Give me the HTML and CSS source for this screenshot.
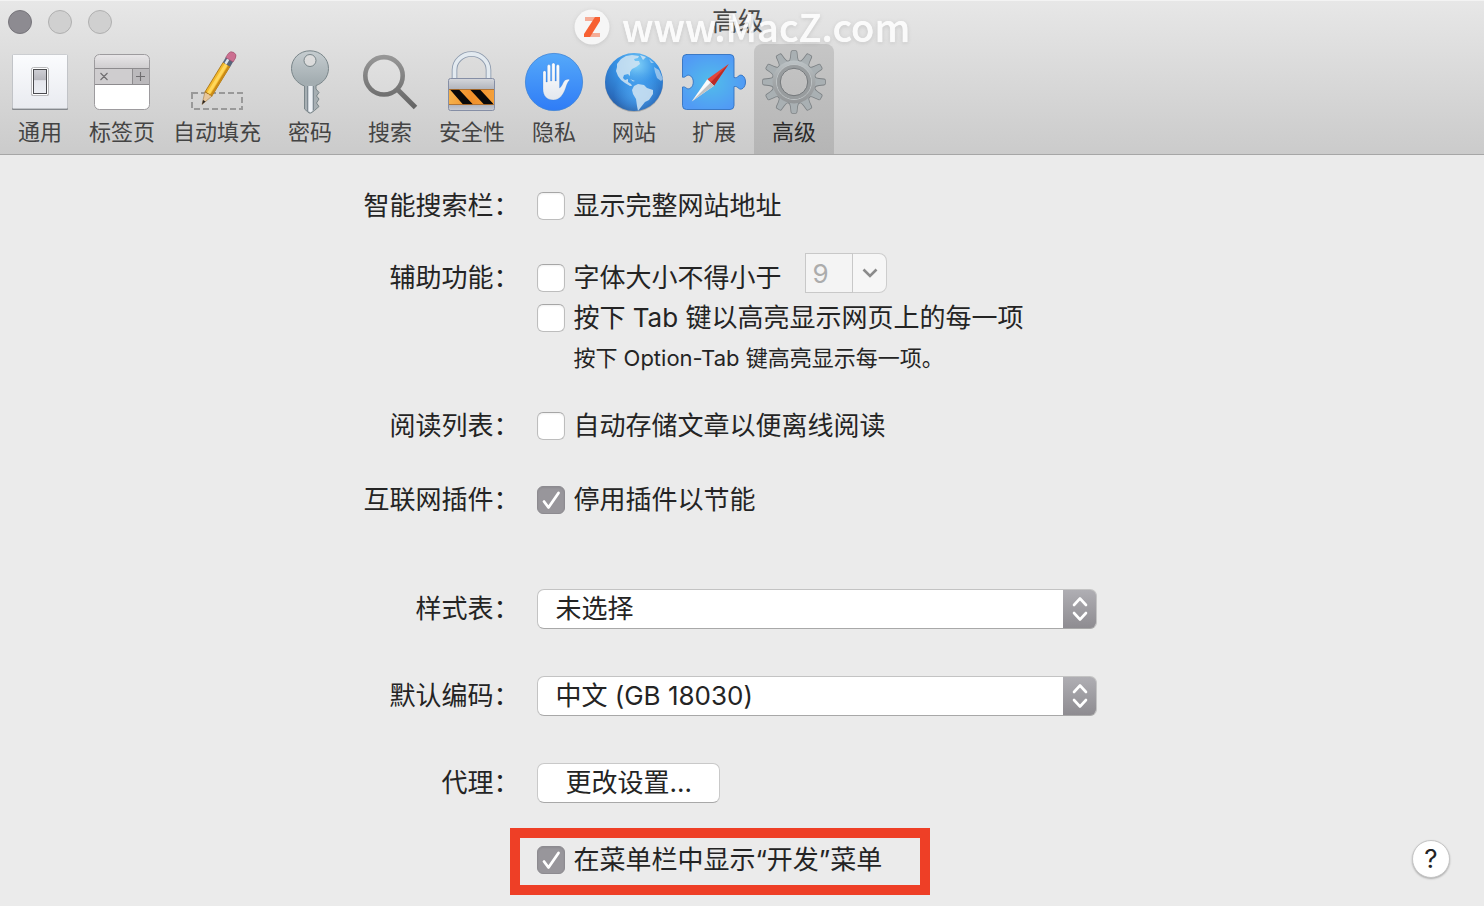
FILE: index.html
```html
<!DOCTYPE html>
<html lang="zh-CN">
<head>
<meta charset="utf-8">
<meta name="viewport" content="width=device-width, initial-scale=1">
<title>高级</title>
<link rel="stylesheet" href="styles.css">
</head>
<body>
<header class="header">
  <div class="titlebar">
    <div class="lights">
      <button class="light light-close" type="button" aria-label="关闭"></button>
      <button class="light" type="button" aria-label="最小化"></button>
      <button class="light" type="button" aria-label="缩放"></button>
    </div>
    <h1 class="title">高级</h1>
  </div>
  <nav class="toolbar">
    <button class="tool" type="button">
      <svg class="icon" viewBox="0 0 64 64" aria-hidden="true">
        <defs>
          <linearGradient id="plate" x1="0" y1="0" x2="0" y2="1"><stop offset="0" stop-color="#fbfcfe"/><stop offset="1" stop-color="#e9ebf0"/></linearGradient>
          <linearGradient id="rocker" x1="0" y1="0" x2="0" y2="1"><stop offset="0" stop-color="#cfcfd5"/><stop offset=".45" stop-color="#b6b6bc"/><stop offset=".46" stop-color="#e6e7ed"/><stop offset="1" stop-color="#eceef3"/></linearGradient>
        </defs>
        <rect x="4" y="5" width="56" height="55" rx="1" fill="#85888d"/>
        <rect x="4.500" y="4.500" width="55" height="54" rx="1" fill="url(#plate)" stroke="#c3c5c9" stroke-width=".8"/>
        <rect x="23" y="18" width="18" height="28" rx="2" fill="#aaa"/>
        <rect x="23.500" y="17.500" width="17" height="28" rx="2" fill="#fff" stroke="#b9b9bb"/>
        <rect x="25.500" y="19.500" width="13" height="24" fill="url(#rocker)" stroke="#4b4b4f" stroke-width="1"/>
      </svg>
      <span class="tool-label">通用</span>
    </button>
    <button class="tool" type="button">
      <svg class="icon" viewBox="0 0 64 64" aria-hidden="true">
        <defs><linearGradient id="tabtop" x1="0" y1="0" x2="0" y2="1"><stop offset="0" stop-color="#e9e7e9"/><stop offset="1" stop-color="#cfcdcf"/></linearGradient></defs>
        <rect x="4.500" y="4.500" width="55" height="55" rx="5" fill="#fff"/>
        <path d="M4.500 18.500V9.500a5 5 0 0 1 5-5h45a5 5 0 0 1 5 5v9z" fill="url(#tabtop)"/>
        <path d="M4.500 18.500h38v16h-38z" fill="#cfcdcf"/>
        <path d="M42.500 18.500h17v16h-17z" fill="#bbb9bc"/>
        <path d="M4.500 18.500h55M4.500 34.500h55M42.500 18.500v16" stroke="#8d8b8e" fill="none"/>
        <rect x="4.500" y="4.500" width="55" height="55" rx="5" fill="none" stroke="#9d9b9e"/>
        <path d="M10.500 23l7 7m0-7l-7 7M46 26.500h9M50.500 22v9" stroke="#6f6d70" stroke-width="1.100" fill="none"/>
      </svg>
      <span class="tool-label">标签页</span>
    </button>
    <button class="tool" type="button">
      <svg class="icon" viewBox="0 0 64 64" aria-hidden="true">
        <rect x="7" y="43" width="50" height="16" fill="none" stroke="#999" stroke-width="2" stroke-dasharray="6 3"/>
        <g transform="translate(17 54.500) rotate(31.500)">
          <path d="M0 0L-4 -12L0 -14L4 -12Z" fill="#e8c79b" stroke="#a8824f" stroke-width=".6"/>
          <path d="M0 0L-1.500 -4.500H1.500Z" fill="#2d2926"/>
          <path d="M-4 -12V-47H4V-12Q2.700 -14 1.400 -12Q0 -14 -1.400 -12Q-2.700 -14 -4 -12Z" fill="#f3b92c" stroke="#a97312" stroke-width=".8"/>
          <path d="M-1.800 -13V-47H1.200V-13Z" fill="#ffd75c"/>
          <path d="M2 -13V-47H4V-13Z" fill="#c98a17"/>
          <path d="M-4.300 -47h8.600v-6h-8.600z" fill="#58657b"/>
          <path d="M-2.500 -47h2.500v-6h-2.500z" fill="#dce5ef"/>
          <path d="M-4.300 -52.500V-57Q-4 -61 0 -61T4.300 -57V-52.500Z" fill="#cc6f91" stroke="#9d4f6b" stroke-width=".6"/>
        </g>
      </svg>
      <span class="tool-label">自动填充</span>
    </button>
    <button class="tool" type="button">
      <svg class="icon" viewBox="0 0 64 64" aria-hidden="true">
        <defs>
          <linearGradient id="key" x1="0" y1="0" x2="0" y2="1"><stop offset="0" stop-color="#c6cdd0"/><stop offset=".5" stop-color="#a3adb1"/><stop offset="1" stop-color="#a9b0b5"/></linearGradient>
        </defs>
        <path fill-rule="evenodd" d="M32 .8C42.500 .8 50.500 8.500 50.500 18.500C50.500 27 44.500 33.500 38 35.500V39l3 3.500-2.500 3.500 2.500 3-2.500 4 2.500 3.500-4.500 4-3.500 2.500H31L26.500 59V36C19.500 33.500 13.500 27 13.500 18.500C13.500 8.500 21.500 .8 32 .8ZM32 4.500a6 6 0 1 0 0 12a6 6 0 1 0 0-12Z" fill="url(#key)" stroke="#798589" stroke-width="1"/>
        <path d="M30.500 36h4v25l-2 1.500-2-1.500z" fill="#edf1f6"/>
        <path d="M29.500 36v25M35.500 36v24" stroke="#7f8a93" stroke-width="1"/>
      </svg>
      <span class="tool-label">密码</span>
    </button>
    <button class="tool" type="button">
      <svg class="icon" viewBox="0 0 64 64" aria-hidden="true">
        <defs><linearGradient id="lens" gradientUnits="userSpaceOnUse" x1="0" y1="4" x2="0" y2="60"><stop offset="0" stop-color="#999"/><stop offset="1" stop-color="#626262"/></linearGradient></defs>
        <circle cx="26" cy="25.800" r="18.700" fill="#fff" fill-opacity=".12" stroke="url(#lens)" stroke-width="4.600"/>
        <path d="M39.500 39.500L57.500 57.500" stroke="url(#lens)" stroke-width="5"/>
      </svg>
      <span class="tool-label">搜索</span>
    </button>
    <button class="tool" type="button">
      <svg class="icon" viewBox="0 0 64 64" aria-hidden="true">
        <defs>
          <linearGradient id="lockbody" x1="0" y1="0" x2="0" y2="1"><stop offset="0" stop-color="#d5d7dc"/><stop offset=".3" stop-color="#b5b8c0"/><stop offset=".8" stop-color="#adb1bb"/><stop offset="1" stop-color="#c9ccd3"/></linearGradient>
          <linearGradient id="amber"><stop offset="0" stop-color="#f5b04a"/><stop offset=".5" stop-color="#f0902a"/><stop offset="1" stop-color="#f4a03a"/></linearGradient>
        </defs>
        <path d="M14.500 29V20a17 16 0 0 1 34 0V29" fill="none" stroke="#8e9bae" stroke-width="5.600"/>
        <path d="M14.500 29V20a17 16 0 0 1 34 0V29" fill="none" stroke="#e3eaf0" stroke-width="3.800"/>
        <rect x="8.500" y="28.500" width="46" height="32" rx="2" fill="url(#lockbody)" stroke="#858ea5"/>
        <path d="M9 39.500h45v15H9z" fill="url(#amber)"/>
        <path d="M10 39.500h9l14 15h-10zM30 39.500h10l13 14v1h-9z" fill="#090909"/>
        <path d="M9 39.500h45M9 54.500h45" stroke="#a86623" stroke-width=".8"/>
      </svg>
      <span class="tool-label">安全性</span>
    </button>
    <button class="tool" type="button">
      <svg class="icon" viewBox="0 0 64 64" aria-hidden="true">
        <defs>
          <linearGradient id="privacy" x1="0" y1="0" x2="0" y2="1"><stop offset="0" stop-color="#55a9fa"/><stop offset="1" stop-color="#2f7cf6"/></linearGradient>
          <linearGradient id="palm" x1="0" y1="0" x2="0" y2="1"><stop offset="0" stop-color="#fff"/><stop offset="1" stop-color="#e2e7ee"/></linearGradient>
        </defs>
        <circle cx="32" cy="32" r="28.600" fill="url(#privacy)" stroke="#3b83d8" stroke-width=".8"/>
        <path d="M21 22.200a1.500 1.500 0 0 1 3 0V32h1.300V16.200a1.600 1.600 0 0 1 3.200 0V31h1.300V14.600a1.600 1.600 0 0 1 3.200 0V31h1.300V16.200a1.600 1.600 0 0 1 3.200 0V38c1.500-.8 2.500-2.500 3.800-5.500c1.200-2.600 3-3.400 5.500-3.300c.8.100 1 .8.400 1.400c-1.600 1.600-2.200 3.600-3.400 6.800c-2.200 6.500-5.600 12.500-12.500 12.500c-6.600 0-10.300-4.200-10.300-11z" fill="url(#palm)" stroke="#2b6dc0" stroke-opacity=".35" stroke-width=".6"/>
      </svg>
      <span class="tool-label">隐私</span>
    </button>
    <button class="tool" type="button">
      <svg class="icon" viewBox="0 0 64 64" aria-hidden="true">
        <defs>
          <radialGradient id="ocean" cx=".55" cy=".2" r=".85"><stop offset="0" stop-color="#7fd0f8"/><stop offset=".4" stop-color="#3793e6"/><stop offset=".8" stop-color="#2a6cbd"/><stop offset="1" stop-color="#2b5c9c"/></radialGradient>
          <radialGradient id="glow" cx=".55" cy=".7" r=".4"><stop offset="0" stop-color="#4ba2ee"/><stop offset="1" stop-color="#4ba2ee" stop-opacity="0"/></radialGradient>
          <clipPath id="sphere"><circle cx="32" cy="32" r="29"/></clipPath>
        </defs>
        <circle cx="32" cy="33" r="29" fill="#777" opacity=".45"/>
        <circle cx="32" cy="32" r="29" fill="url(#ocean)"/>
        <circle cx="32" cy="32" r="29" fill="url(#glow)"/>
        <g clip-path="url(#sphere)" fill="#cfe3f2" opacity=".88">
          <path d="M15 14L19 9L24 6L30 5L37 6L36 8L32 9L33 11L37 11L38 14L34 17L30 19L28 22L28 26L26 24L22 25L21 28L23 30L26 29L26 32L29 34L30 36L28 36L23 33L19 30L16 26L14 21L15 17Z"/>
          <path d="M32 36L36 34L42 35L45 38L51 40L51 44L47 50L43 52L39 57L36 61L35 56L34 49L31 44L30 40Z"/>
          <path d="M28 29L33 31L31 31.500ZM38 5L44 7L41 10Z"/>
          <path d="M52 17L57 20L61 29L59 31L55 28L53 22ZM47 9L52 13L49 13Z" opacity=".7"/>
        </g>
      </svg>
      <span class="tool-label">网站</span>
    </button>
    <button class="tool" type="button">
      <svg class="icon" viewBox="0 0 64 64" aria-hidden="true">
        <defs><radialGradient id="puzzle" cx=".45" cy=".5" r=".55"><stop offset="0" stop-color="#51bdea"/><stop offset="1" stop-color="#519af5"/></radialGradient></defs>
        <path d="M4 4.500H48a4 4 0 0 1 4 4V27.500c2 .5 3.500 0 4.200-1.200c3-3 7.300 0 7.300 5.700s-4.300 9-7.300 6c-1-1.300-2.300-1.800-4.200-1.400V55.500a4 4 0 0 1-4 4H4.500a4 4 0 0 1-4-4V37c1.500-.3 2.600 0 3.600 1c3 2.500 7.200-.8 7.200-6s-4.200-8.500-7.200-6c-1 1-2.100 1.500-3.600 1.200V8.500a4 4 0 0 1 4-4z" fill="url(#puzzle)" stroke="#3272c0" stroke-width=".9"/>
        <path d="M46.700 14L25.300 29.300L32 35.700Z" fill="#e2453a"/>
        <path d="M46.700 14L28.600 32.500L32 35.700Z" fill="#b92a27"/>
        <path d="M9.700 51.500L25.300 29.300L32 35.700Z" fill="#fafafa"/>
        <path d="M9.700 51.500L28.600 32.500L32 35.700Z" fill="#bfc1c3"/>
      </svg>
      <span class="tool-label">扩展</span>
    </button>
    <button class="tool tool-active" type="button" aria-current="page">
      <svg class="icon" viewBox="0 0 64 64" aria-hidden="true">
        <defs>
          <linearGradient id="steel" gradientUnits="userSpaceOnUse" x1="0" y1="0" x2="0" y2="64"><stop offset="0" stop-color="#c9d1d4"/><stop offset=".5" stop-color="#a3a7a9"/><stop offset="1" stop-color="#8b8d8f"/></linearGradient>
          <path id="tooth" d="M26.500 12Q28.600 10.500 28.900 7L29.400 2Q29.500 1 30.400 1H33.600Q34.500 1 34.600 2L35.100 7Q35.400 10.500 37.500 12Z"/>
          <g id="teeth">
            <use href="#tooth"/><use href="#tooth" transform="rotate(30 32 32)"/><use href="#tooth" transform="rotate(60 32 32)"/><use href="#tooth" transform="rotate(90 32 32)"/><use href="#tooth" transform="rotate(120 32 32)"/><use href="#tooth" transform="rotate(150 32 32)"/><use href="#tooth" transform="rotate(180 32 32)"/><use href="#tooth" transform="rotate(210 32 32)"/><use href="#tooth" transform="rotate(240 32 32)"/><use href="#tooth" transform="rotate(270 32 32)"/><use href="#tooth" transform="rotate(300 32 32)"/><use href="#tooth" transform="rotate(330 32 32)"/>
          </g>
          <mask id="bore"><rect width="64" height="64" fill="#fff"/><circle cx="32" cy="32" r="13.500"/></mask>
        </defs>
        <g mask="url(#bore)">
          <use href="#teeth" fill="none" stroke="#7c8184" stroke-width="1.600"/>
          <circle cx="32" cy="32" r="22.300" fill="#7c8184"/>
          <use href="#teeth" fill="#a9b0b3"/>
          <circle cx="32" cy="32" r="21.500" fill="url(#steel)"/>
        </g>
        <circle cx="32" cy="32" r="17.500" fill="none" stroke="#bfc4c6" stroke-width="1"/>
        <circle cx="32" cy="32" r="15.500" fill="none" stroke="#989c9e" stroke-width="3"/>
        <circle cx="32" cy="32" r="13.700" fill="none" stroke="#74787b" stroke-width="1"/>
      </svg>
      <span class="tool-label">高级</span>
    </button>
  </nav>
  <div class="watermark" aria-hidden="true">
    <svg class="watermark-logo" viewBox="0 0 36 36"><circle cx="18" cy="18" r="17.500" fill="#fafafa"/><path d="M11 8h13v4H11zM12 24h14v4H12z" fill="#f9a58c"/><path d="M21 8h5v4L16 28h-6v-3z" fill="#fb4b16"/></svg>
    <span class="watermark-text">www.MacZ.com</span>
  </div>
</header>

<main class="panel">
  <div class="row">
    <span class="row-label">智能搜索栏：</span>
    <label class="option"><input class="check" type="checkbox">显示完整网站地址</label>
  </div>
  <div class="group-access">
    <div class="row">
      <span class="row-label">辅助功能：</span>
      <div class="font-size">
        <label class="option"><input class="check" type="checkbox">字体大小不得小于</label>
        <div class="combo">
          <input class="combo-input" type="text" value="9" aria-label="最小字体大小" disabled>
          <button class="combo-button" type="button" aria-label="选择字体大小" disabled>
            <svg class="combo-arrow" viewBox="0 0 16 10" aria-hidden="true"><path d="M1.500 1.500L8 8L14.500 1.500" fill="none" stroke="#8b8b8b" stroke-width="2.600"/></svg>
          </button>
        </div>
      </div>
    </div>
    <div class="row">
      <label class="option"><input class="check" type="checkbox" aria-describedby="tab-note">按下 Tab 键以高亮显示网页上的每一项</label>
    </div>
    <div class="row">
      <p class="note" id="tab-note">按下 Option-Tab 键高亮显示每一项。</p>
    </div>
  </div>
  <div class="row row-reading">
    <span class="row-label">阅读列表：</span>
    <label class="option"><input class="check" type="checkbox">自动存储文章以便离线阅读</label>
  </div>
  <div class="row row-plugins">
    <span class="row-label">互联网插件：</span>
    <label class="option"><input class="check" type="checkbox" checked>停用插件以节能</label>
  </div>
  <div class="row row-style">
    <label class="row-label" for="stylesheet">样式表：</label>
    <select class="popup" id="stylesheet"><option>未选择</option></select>
  </div>
  <div class="row row-popup">
    <label class="row-label" for="encoding">默认编码：</label>
    <select class="popup" id="encoding"><option>中文 (GB 18030)</option></select>
  </div>
  <div class="row row-popup">
    <span class="row-label">代理：</span>
    <button class="push" type="button">更改设置…</button>
  </div>
  <div class="row row-develop">
    <div class="footer">
      <div class="highlight"><label class="option"><input class="check" type="checkbox" checked>在菜单栏中显示“开发”菜单</label></div>
      <button class="help" type="button" aria-label="帮助">?</button>
    </div>
  </div>
</main>
</body>
</html>
```
FILE: styles.css
```css
* {
  box-sizing: border-box;
}

body {
  margin: 0;
  min-height: 100vh;
  background: #ebebeb;
  color: #242424;
  font: 26px/40px Inter, "Noto Sans CJK SC", sans-serif;
}

button,
input,
select {
  margin: 0;
  font: inherit;
  color: inherit;
}

.header {
  position: relative;
  background: linear-gradient(#e7e7e7, #cbcbcb);
  border-top: 1px solid #f3f3f3;
  border-bottom: 1px solid #a6a6a6;
}

.titlebar {
  display: grid;
  grid-template-columns: 1fr auto 1fr;
  align-items: center;
  height: 43px;
  padding: 0 16px 2px 8px;
}

.lights {
  display: flex;
  gap: 16px;
}

.light {
  width: 24px;
  height: 24px;
  padding: 0;
  border: 1px solid #b0b0b0;
  border-radius: 50%;
  background: #d0d0d0;
}

.light-close {
  border-color: #77757b;
  background: #8d8b91;
}

.title {
  margin: 0;
  font-size: 26px;
  font-weight: 400;
  color: #484848;
}

.toolbar {
  display: flex;
}

.tool {
  display: flex;
  flex-direction: column;
  align-items: center;
  min-width: 80px;
  padding: 6px 8px 4px;
  border: 0;
  border-radius: 8px 8px 0 0;
  background: none;
  color: #444;
}

.tool-active {
  background: linear-gradient(#c6c6c6, #b5b5b5);
  color: #2b2b2b;
}

.icon {
  width: 64px;
  height: 64px;
}

.tool-label {
  padding: 0 1px;
  font-size: 22px;
  line-height: 36px;
  white-space: nowrap;
}

.watermark {
  position: absolute;
  top: 6px;
  left: 50%;
  display: flex;
  align-items: flex-end;
  gap: 12px;
  margin-left: -168px;
  opacity: 0.86;
  pointer-events: none;
}

.watermark-logo {
  width: 36px;
  height: 36px;
  filter: drop-shadow(0 1px 2px #9996);
}

.watermark-text {
  font: 500 38px/38px "Noto Sans CJK SC", sans-serif;
  color: #fff;
  text-shadow: 0 0 1px #fff, 0 1px 4px #8886;
}

.panel {
  padding-top: 31px;
}

.row {
  display: grid;
  grid-template-columns: 35% 1fr;
  column-gap: 18px;
  align-items: end;
}

.row > :last-child {
  grid-column: 2;
}

.row-label {
  text-align: right;
}

.option {
  display: flex;
  align-items: center;
  gap: 8px;
}

.check {
  flex: none;
  width: 28px;
  height: 28px;
  appearance: none;
  border: 1px solid #bdbdbd;
  border-top-color: #a6a6a6;
  border-radius: 6px;
  background: #fff;
  box-shadow: inset 0 1px 2px #0001;
}

.check:checked {
  border-color: #8d8b90;
  background: #98969b url("data:image/svg+xml,%3Csvg xmlns='http://www.w3.org/2000/svg' viewBox='0 0 26 26'%3E%3Cpath d='M6 14.500l4.500 6L20.500 6' fill='none' stroke='white' stroke-width='2.800' stroke-linecap='round' stroke-linejoin='round'/%3E%3C/svg%3E") center / 26px 26px no-repeat;
}

.group-access {
  margin-top: 27px;
}

.font-size {
  display: flex;
  align-items: flex-end;
  gap: 24px;
}

.combo {
  display: flex;
  height: 40px;
  margin-bottom: 5px;
}

.combo-input {
  width: 48px;
  padding: 2px 6px 0;
  border: 1px solid #c8c8c8;
  background: #f4f4f4;
  color: #acacac;
}

.combo-button {
  display: grid;
  place-items: center;
  width: 34px;
  padding: 0;
  border: 1px solid #cdcdcd;
  border-left: 0;
  border-radius: 0 8px 8px 0;
  background: #f6f6f6;
}

.combo-arrow {
  width: 16px;
  height: 10px;
}

.note {
  margin: 0;
  padding-left: 36px;
  font-size: 22px;
}

.row-reading {
  margin-top: 28px;
}

.row-plugins {
  margin-top: 34px;
}

.row-style {
  margin-top: 69px;
}

.row-popup {
  margin-top: 47px;
}

.popup {
  width: 100%;
  max-width: 560px;
  height: 40px;
  padding: 0 48px 0 17px;
  appearance: none;
  border: 1px solid #c3c3c3;
  border-bottom-color: #a8a8a8;
  border-radius: 7px;
  background:
    url("data:image/svg+xml,%3Csvg xmlns='http://www.w3.org/2000/svg' viewBox='0 0 34 40'%3E%3Cpath d='M11 16l6-6.500 6 6.500M11 24l6 6.500 6-6.500' fill='none' stroke='white' stroke-width='2.600' stroke-linecap='round' stroke-linejoin='round'/%3E%3C/svg%3E") right center / 34px 40px no-repeat border-box,
    linear-gradient(#b0afb4, #8d8b90) right / 34px 100% no-repeat border-box,
    #fff;
  line-height: 38px;
}

.push {
  justify-self: start;
  height: 40px;
  padding: 0 27px;
  border: 1px solid #c9c9c9;
  border-bottom-color: #a8a8a8;
  border-radius: 7px;
  background: #fff;
  line-height: 38px;
}

.row-develop {
  margin-top: 25px;
}

.footer {
  display: flex;
  align-items: center;
  justify-content: space-between;
  padding-right: 34px;
}

.highlight {
  margin-left: -27px;
  padding: 2px 38px 5px 17px;
  border: 10px solid #ee3f26;
}

.help {
  width: 38px;
  height: 38px;
  margin-bottom: 6px;
  padding: 0;
  border: 1px solid #c6c6c6;
  border-radius: 50%;
  background: #fff;
  box-shadow: 0 1px 2px #0004;
  line-height: 36px;
}
```
